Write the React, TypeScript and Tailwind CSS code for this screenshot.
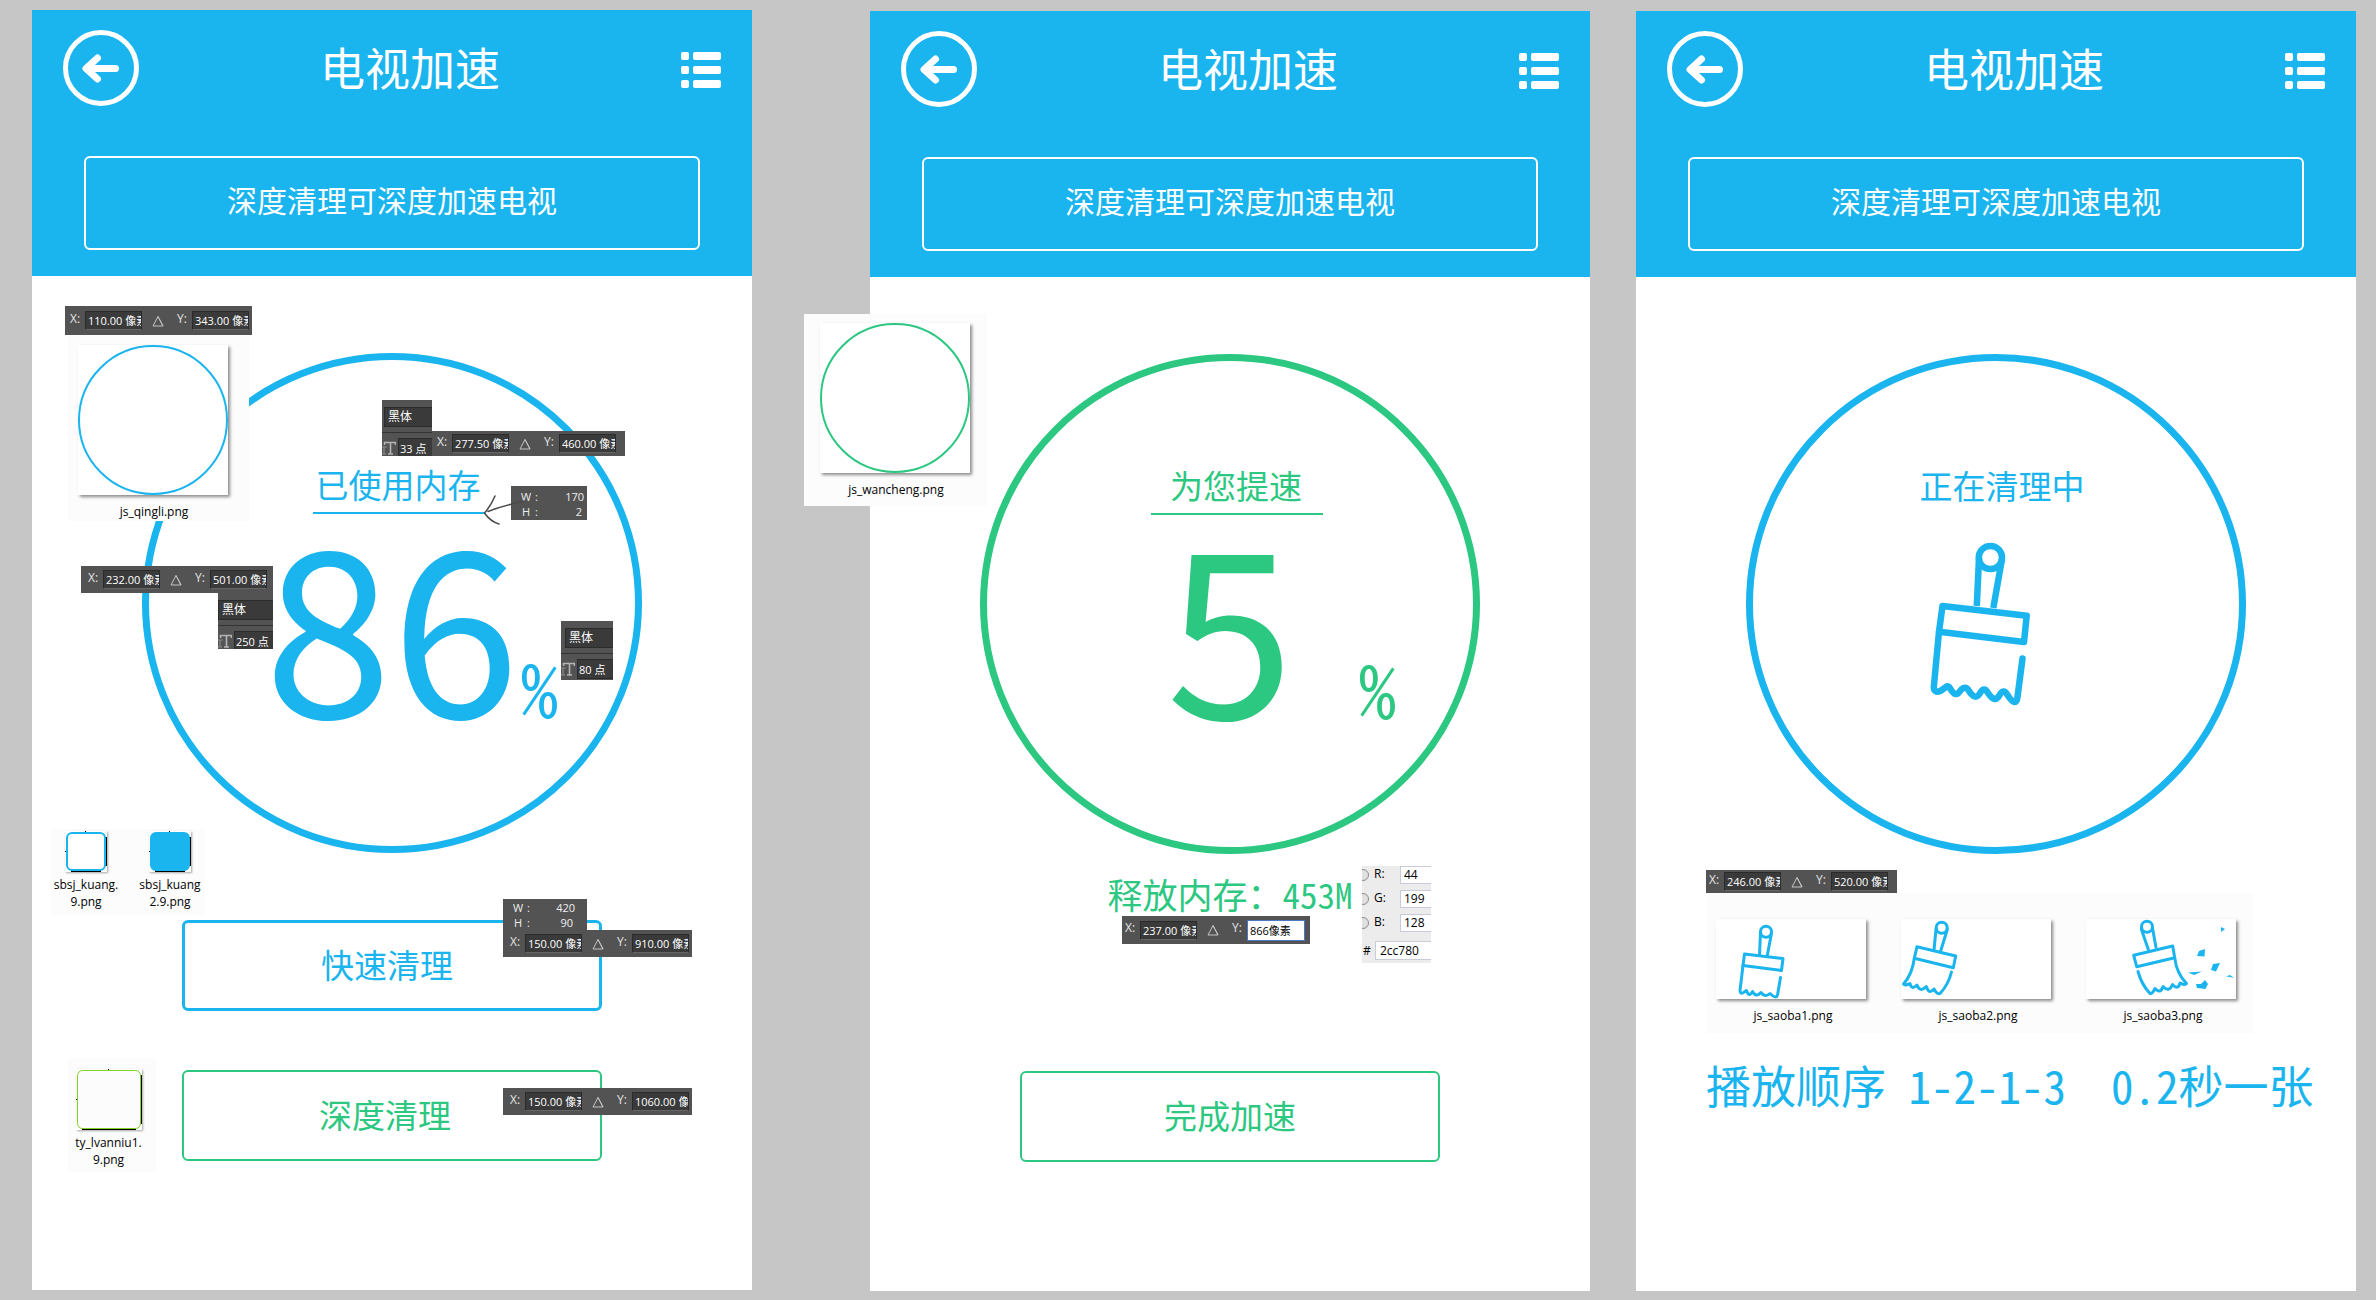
import type { ReactNode } from "react";

const CJK = "font-['Noto_Sans_CJK_SC',sans-serif]";
const MONO = "font-['Noto_Sans_Mono_CJK_SC','Liberation_Mono','Noto_Sans_CJK_SC',monospace]";
const SMALL = "font-['Open_Sans','Noto_Sans_CJK_SC',sans-serif]";

/* ---------- app screens ---------- */

function Header() {
  return (
    <header className="bg-[#1ab4ee] px-[31px] pt-5 pb-[26px] text-white">
      <div className="flex items-center justify-between">
        <button type="button" aria-label="返回" className="size-[76px] shrink-0">
          <svg viewBox="0 0 76 76" className="size-full" fill="none" stroke="currentColor" strokeLinecap="round" strokeLinejoin="round">
            <circle cx="38" cy="38" r="35.5" strokeWidth="5" />
            <path d="M52.5 38.5H25M34.5 28L23 38.5L34.5 49" strokeWidth="7" />
          </svg>
        </button>
        <h1 className="pb-[2px] text-[45px] leading-[60px] whitespace-nowrap">电视加速</h1>
        <button type="button" aria-label="菜单" className="mt-1 h-9 w-10 shrink-0">
          <svg viewBox="0 0 40 36" className="size-full" fill="currentColor">
            {[0, 14, 28].map((y) => (
              <g key={y}>
                <rect x="0" y={y} width="8" height="8" rx="2" />
                <rect x="12" y={y} width="28" height="8" rx="2" />
              </g>
            ))}
          </svg>
        </button>
      </div>
      <button type="button" className="mx-auto mt-[50px] flex h-[94px] w-full max-w-[616px] items-center justify-center rounded-md border-2 border-white pb-2 text-[30px] leading-[40px] whitespace-nowrap">
        深度清理可深度加速电视
      </button>
    </header>
  );
}

function Screen({ className = "", children }: { className?: string; children: ReactNode }) {
  return (
    <section className={`relative min-h-[1280px] min-w-0 flex-1 bg-white ${className}`}>
      <Header />
      {children}
    </section>
  );
}

function Dial({ tone, caption, underline = true, children }: { tone: "blue" | "green"; caption: string; underline?: boolean; children: ReactNode }) {
  const color = tone === "blue" ? "border-[#1ab4ee] text-[#1ab4ee]" : "border-[#2cc780] text-[#2cc780]";
  return (
    <div className={`mx-auto mt-[77px] size-[500px] rounded-full border-[7px] pt-[104px] ${color}`}>
      <div className="pl-[14px]">
        <h2 className={`mx-auto w-[172px] border-b-2 pr-[2px] pb-2 text-center text-[33px] leading-[40px] whitespace-nowrap ${underline ? "border-current" : "border-transparent"}`}>
          {caption}
        </h2>
      </div>
      {children}
    </div>
  );
}

function Percent({ value }: { value: number }) {
  return (
    <p className="mt-1 ml-[114px] flex items-baseline">
      <span className="w-[258px] text-center text-[230px] leading-[200px]">{value}</span>
      <span className={`${MONO} text-[74px] leading-[80px]`}>%</span>
    </p>
  );
}

function ActionButton({ className, children }: { className: string; children: ReactNode }) {
  return (
    <button type="button" className={`mx-auto flex h-[91px] w-[420px] items-center justify-center rounded-md pb-1 text-[33px] leading-[40px] ${className}`}>
      {children}
    </button>
  );
}

/* ---------- measuring notes ---------- */

function Field({ label, value }: { label: string; value: string }) {
  return (
    <input
      aria-label={label}
      defaultValue={value}
      className="h-[19px] w-[57px] min-w-0 border border-[#2b2b2b] border-b-[#666666] bg-[#3a3a3a] pb-px pl-[2px] text-[11px] leading-[15px] text-white"
    />
  );
}

function Delta() {
  return (
    <svg viewBox="0 0 12 12" className="mx-[10px] size-3 shrink-0" fill="none" stroke="#c4c4c4">
      <path d="M6 1.5L1 11H11L6 1.5ZM6 1.5L11 11" />
    </svg>
  );
}

function CoordBar({ x, y, className, active = false }: { x: string; y: string; className: string; active?: boolean }) {
  return (
    <div className={`${SMALL} flex items-center bg-[#535353] text-[12px] leading-[16px] text-[#e4e4e4] ${className}`}>
      <span className="w-[15px] shrink-0 pb-1">X:</span>
      <Field label="X" value={x} />
      <Delta />
      <span className="w-[18px] shrink-0 pb-1 pl-[3px]">Y:</span>
      {active ? (
        <input
          aria-label="Y"
          defaultValue={y}
          className="h-[21px] w-[58px] min-w-0 border border-[#4a78c4] bg-white pb-px pl-[2px] text-[11px] leading-[16px] text-black"
        />
      ) : (
        <Field label="Y" value={y} />
      )}
    </div>
  );
}

function TypeNote({ size, className, inset = "pl-[2px]" }: { size: string; className: string; inset?: string }) {
  return (
    <div className={`${SMALL} overflow-hidden bg-[#535353] pt-[3px] ${className}`}>
      <div className={inset}>
        <input aria-label="字体" defaultValue="黑体" className="h-5 w-full border border-r-0 border-[#2b2b2b] bg-[#3a3a3a] pb-px pl-[3px] text-[12px] leading-[16px] text-white" />
      </div>
      <div className="my-[5px] h-px bg-[#333333]" />
      <div className="flex items-center">
        <svg viewBox="0 0 14 14" className="size-[14px] shrink-0" fill="none" stroke="#b4b4b4">
          <path d="M2.5 4V1.5H13.5V4M8.5 1.5V13M6 13H11" strokeWidth="1.6" />
          <path d="M0 6H5M2 6V13M0 13H4" stroke="#8c8c8c" strokeWidth="1.2" />
        </svg>
        <input aria-label="字号" defaultValue={size} className="ml-[2px] h-5 w-full min-w-0 border border-r-0 border-[#2b2b2b] bg-[#3a3a3a] pb-px pl-px text-[11px] leading-[16px] text-white" />
      </div>
    </div>
  );
}

function SizeNote({ w, h, className }: { w: number; h: number; className: string }) {
  return (
    <dl className={`${SMALL} grid grid-cols-[18px_auto_1fr] bg-[#535353] text-[11px] leading-[14px] text-[#eeeeee] ${className}`}>
      <dt className="text-center">W</dt>
      <dd>:</dd>
      <dd className="text-right">{w}</dd>
      <dt className="text-center">H</dt>
      <dd>:</dd>
      <dd className="pr-[2px] text-right">{h}</dd>
    </dl>
  );
}

function FileName({ children, className = "" }: { children: ReactNode; className?: string }) {
  return <figcaption className={`${SMALL} text-center text-[12px] leading-[17px] text-black ${className}`}>{children}</figcaption>;
}

const SHEET = "bg-[#fcfcfc]";
const PAPER = "bg-white shadow-[2px_2px_3px_rgba(0,0,0,0.45)]";

function RingFile({ name, ring, className }: { name: string; ring: string; className: string }) {
  return (
    <figure className={`absolute flex flex-col ${SHEET} ${className}`}>
      <div className={`size-[150px] ${PAPER}`}>
        <div className={`size-full rounded-full border-2 ${ring}`} />
      </div>
      <FileName className="mt-2 w-[152px]">{name}</FileName>
    </figure>
  );
}

function NinePatch({ width, height, fill, stroke, lineWidth }: { width: number; height: number; fill: string; stroke: string; lineWidth: number }) {
  const middleX = Math.floor(width / 2);
  const middleY = Math.floor(height / 2);
  return (
    <svg width={width} height={height} viewBox={`0 0 ${width} ${height}`} className="mx-auto bg-white shadow-[1px_1px_2px_rgba(0,0,0,0.35)]">
      <path d={`M${width - 1} 6V${height - 6}M6 ${height - 1}H${width - 6}`} stroke="#000" strokeWidth="2" />
      <path d={`M${middleX - 1} 0.5h1M0 ${middleY}.5h1`} stroke="#000" />
      <rect x={lineWidth / 2 + 1} y={lineWidth / 2 + 1} width={width - 2 - lineWidth} height={height - 2 - lineWidth} rx="5" fill={fill} stroke={stroke} strokeWidth={lineWidth} />
    </svg>
  );
}

/* ---------- brushes ---------- */

function UprightBrush({ className }: { className: string }) {
  return (
    <svg viewBox="0 0 110 168" className={className} fill="none" stroke="#1ab4ee" strokeWidth="6.5" strokeLinejoin="round" strokeLinecap="round">
      <circle cx="65.4" cy="17.5" r="11.6" />
      <path d="M54 18L51.8 66M77 19L68.3 68" strokeLinecap="butt" />
      <path d="M14 91.7L17.5 66L101.7 75.7L99 102Z" />
      <path d="M14 91.7L8.8 147Q9 154 16 150.5L21 147Q23.5 145 25.5 149Q30.5 158 35 151Q40.5 144.5 44 151Q50 160.5 54.5 154Q59 145.5 63 153Q69.5 163 74 156Q78.5 147.5 82.5 155Q91 168 92.5 157L97.5 118.5" />
    </svg>
  );
}

function FileFrame({ name, children }: { name: string; children: ReactNode }) {
  return (
    <figure className="w-[150px]">
      <svg viewBox="0 0 150 80" className={`h-20 w-[150px] ${PAPER}`} fill="none" stroke="#1ab4ee" strokeWidth="3" strokeLinejoin="round" strokeLinecap="round">
        {children}
      </svg>
      <FileName className="mt-2 w-[154px]">{name}</FileName>
    </figure>
  );
}

function BrushFiles() {
  return (
    <div className={`flex w-[548px] gap-[35px] pt-[26px] pb-[9px] pl-[10px] ${SHEET}`}>
      <FileFrame name="js_saoba1.png">
        <circle cx="50" cy="12.7" r="5.5" />
        <path d="M44.5 13L43.6 35M55.6 13.5L51.4 36" />
        <path d="M27 46.5L28.5 35L67 39.5L65.5 51.5Z" />
        <path d="M27 46.5L24 71.5Q24 75.5 27.5 73.5L30.5 71.500Q33 79 36.500 72.500Q40 79 45 73.500Q49 79 54 74.500Q60 80.500 61.500 76L64.500 58.500" />
      </FileFrame>
      <FileFrame name="js_saoba2.png">
        <circle cx="40.7" cy="8.7" r="5.5" />
        <path d="M35 10L33 31M46.3 10.5L39.5 32.5" />
        <path d="M16 27.7L54.7 37L52.3 48.7L13.3 39.3Z" />
        <path d="M13.3 39.3C12 50 8 59 2.5 65Q5 67 9 64.5Q10.5 71.5 16 66Q19 74 25.3 67.5Q28 76 33 70Q36.5 76.5 39.5 74C45 68 48.5 61 50.5 53" />
      </FileFrame>
      <FileFrame name="js_saoba3.png">
        <circle cx="61" cy="7.7" r="5.5" />
        <path d="M55.3 10L62.3 30.5M66.5 9L70 28.5" />
        <path d="M47.7 36.3L86.7 27L88.7 38.7L50.7 47.7Z" />
        <path d="M88.7 38.7C90 50 94 58 100.5 64.5Q98 66.5 94 64Q92 71.5 86.5 65.5Q83 74 77 67.5Q74.5 75.5 69 69.5Q66 76 63.5 74C58 68 54 60 52 52.5" />
        <path
          d="M135 8L139 10L135 13ZM113 32L119 30L118.5 37.5L111 37ZM127 45L134 44L130 52.5L125 51ZM102 53.5L116 52.5L108 56ZM110 65L115 65L119 61L122 65L119.5 70L111 69ZM140 57.5L144 56L148 59L144 58Z"
          fill="#1ab4ee"
          stroke="none"
        />
      </FileFrame>
    </div>
  );
}

/* ---------- colour picker note ---------- */

function ColorNote() {
  const channels = [
    ["R:", "44"],
    ["G:", "199"],
    ["B:", "128"],
  ];
  return (
    <div className={`${SMALL} absolute top-[855px] left-[492px] w-[69px] overflow-hidden bg-[#ececec] text-[12px] leading-[16px] text-black`}>
      {channels.map(([name, value]) => (
        <label key={name} className="flex h-6 items-start">
          <span className="mt-[3px] -ml-[5px] size-3 shrink-0 rounded-full border border-[#8c8c8c] bg-[#e0e0e0]" />
          <span className="ml-[5px] w-[26px] shrink-0">{name}</span>
          <input defaultValue={value} className="h-[18px] w-8 min-w-0 border border-r-0 border-[#c9ccd6] bg-white pb-px pl-[3px]" />
        </label>
      ))}
      <label className="flex h-[25px] items-center">
        <span className="w-[13px] shrink-0 pl-px">#</span>
        <input defaultValue="2cc780" className="h-[19px] w-14 min-w-0 border border-r-0 border-[#c9ccd6] bg-white pl-1" />
      </label>
    </div>
  );
}

export default function App() {
  return (
    <main className={`${CJK} flex min-h-screen items-start bg-[#c6c6c6] pt-[10px] pr-5 pb-[9px] pl-8`}>
      <Screen>
        <Dial tone="blue" caption="已使用内存">
          <Percent value={86} />
        </Dial>
        <div className="mt-[67px] flex flex-col gap-[59px]">
          <ActionButton className="border-[3px] border-[#1ab4ee] pr-[10px] text-[#1ab4ee]">快速清理</ActionButton>
          <ActionButton className="border-2 border-[#2cc780] pr-[14px] text-[#2cc780]">深度清理</ActionButton>
        </div>

        <CoordBar x="110.00 像素" y="343.00 像素" className="absolute top-[296px] left-[33px] h-[29px] w-[187px] pl-[5px]" />
        <RingFile name="js_qingli.png" ring="border-[#1ab4ee]" className="top-[325px] left-[36px] w-[181px] pt-[10px] pb-px pl-[10px]" />
        <TypeNote size="33 点" className="absolute top-[390px] left-[350px] h-14 w-[50px]" />
        <CoordBar x="277.50 像素" y="460.00 像素" className="absolute top-[421px] left-[400px] h-[25px] w-[193px] pl-[5px]" />
        <SizeNote w={170} h={2} className="absolute top-[476px] left-[479px] h-[34px] w-[76px] pt-1 pr-[3px] pl-[6px]" />
        <svg viewBox="0 0 44 32" className="absolute top-[485px] left-[450px] h-8 w-11" fill="none" stroke="#4a4a4a" strokeWidth="1.5" strokeLinecap="round" strokeLinejoin="round">
          <path d="M42 6C30 9 17 12 6 16.5M13 1C10 8 7 13 2.5 18C6 23 10 27 17 29" />
        </svg>
        <CoordBar x="232.00 像素" y="501.00 像素" className="absolute top-[556px] left-[49px] h-[27px] w-[192px] pl-[7px]" />
        <TypeNote size="250 点" className="absolute top-[583px] left-[186px] h-14 w-[55px]" inset="" />
        <TypeNote size="80 点" className="absolute top-[611px] left-[529px] h-[59px] w-[52px]" inset="pl-1" />

        <div className={`absolute top-[819px] left-[19px] flex w-[154px] justify-between pt-[2px] pb-[5px] ${SHEET}`}>
          <figure className="w-[70px]">
            <NinePatch width={42} height={41} fill="#fff" stroke="#1ab4ee" lineWidth={2} />
            <FileName className="mt-1">
              sbsj_kuang.
              <br />
              9.png
            </FileName>
          </figure>
          <figure className="w-[70px]">
            <NinePatch width={42} height={41} fill="#1ab4ee" stroke="#1ab4ee" lineWidth={2} />
            <FileName className="mt-1">
              sbsj_kuang
              <br />
              2.9.png
            </FileName>
          </figure>
        </div>
        <figure className={`absolute top-[1048px] left-[36px] w-[88px] pt-[11px] pr-[7px] pb-1 ${SHEET}`}>
          <NinePatch width={66} height={61} fill="#fcfcfc" stroke="#7ed321" lineWidth={1} />
          <FileName className="mt-1">
            ty_lvanniu1.
            <br />
            9.png
          </FileName>
        </figure>

        <SizeNote w={420} h={90} className="absolute top-[889px] left-[471px] h-[31px] w-[84px] pt-[2px] pr-3 pl-[6px]" />
        <CoordBar x="150.00 像素" y="910.00 像素" className="absolute top-[920px] left-[471px] h-[27px] w-[189px] pl-[7px]" />
        <CoordBar x="150.00 像素" y="1060.00 像素" className="absolute top-[1078px] left-[471px] h-[27px] w-[189px] pl-[7px]" />
      </Screen>

      <div className="w-[118px] shrink-0" />

      <Screen className="mt-px">
        <Dial tone="green" caption="为您提速">
          <Percent value={5} />
        </Dial>
        <p className={`${MONO} mt-5 text-center text-[35px] leading-[40px] whitespace-nowrap text-[#2cc780]`}>释放内存：453M</p>
        <ActionButton className="mt-[157px] border-2 border-[#2cc780] text-[#2cc780]">完成加速</ActionButton>

        <RingFile name="js_wancheng.png" ring="border-[#2cc780]" className="top-[303px] left-[-66px] w-[183px] pt-[9px] pb-2 pl-4" />
        <CoordBar active x="237.00 像素" y="866像素" className="absolute top-[905px] left-[252px] h-7 w-[188px] pl-[3px]" />
        <ColorNote />
      </Screen>

      <div className="w-[46px] shrink-0" />

      <Screen className="mt-px">
        <Dial tone="blue" caption="正在清理中" underline={false}>
          <UprightBrush className="mt-[25px] ml-[172px] h-[168px] w-[110px]" />
        </Dial>
        <div className="mt-4 ml-[70px]">
          <CoordBar x="246.00 像素" y="520.00 像素" className="h-[23px] w-[191px] pl-[3px]" />
          <BrushFiles />
          <p className={`${MONO} mt-[27px] text-[45px] leading-[50px] whitespace-pre text-[#1ab4ee]`}>{"播放顺序 1-2-1-3  0.2秒一张"}</p>
        </div>
      </Screen>
    </main>
  );
}
